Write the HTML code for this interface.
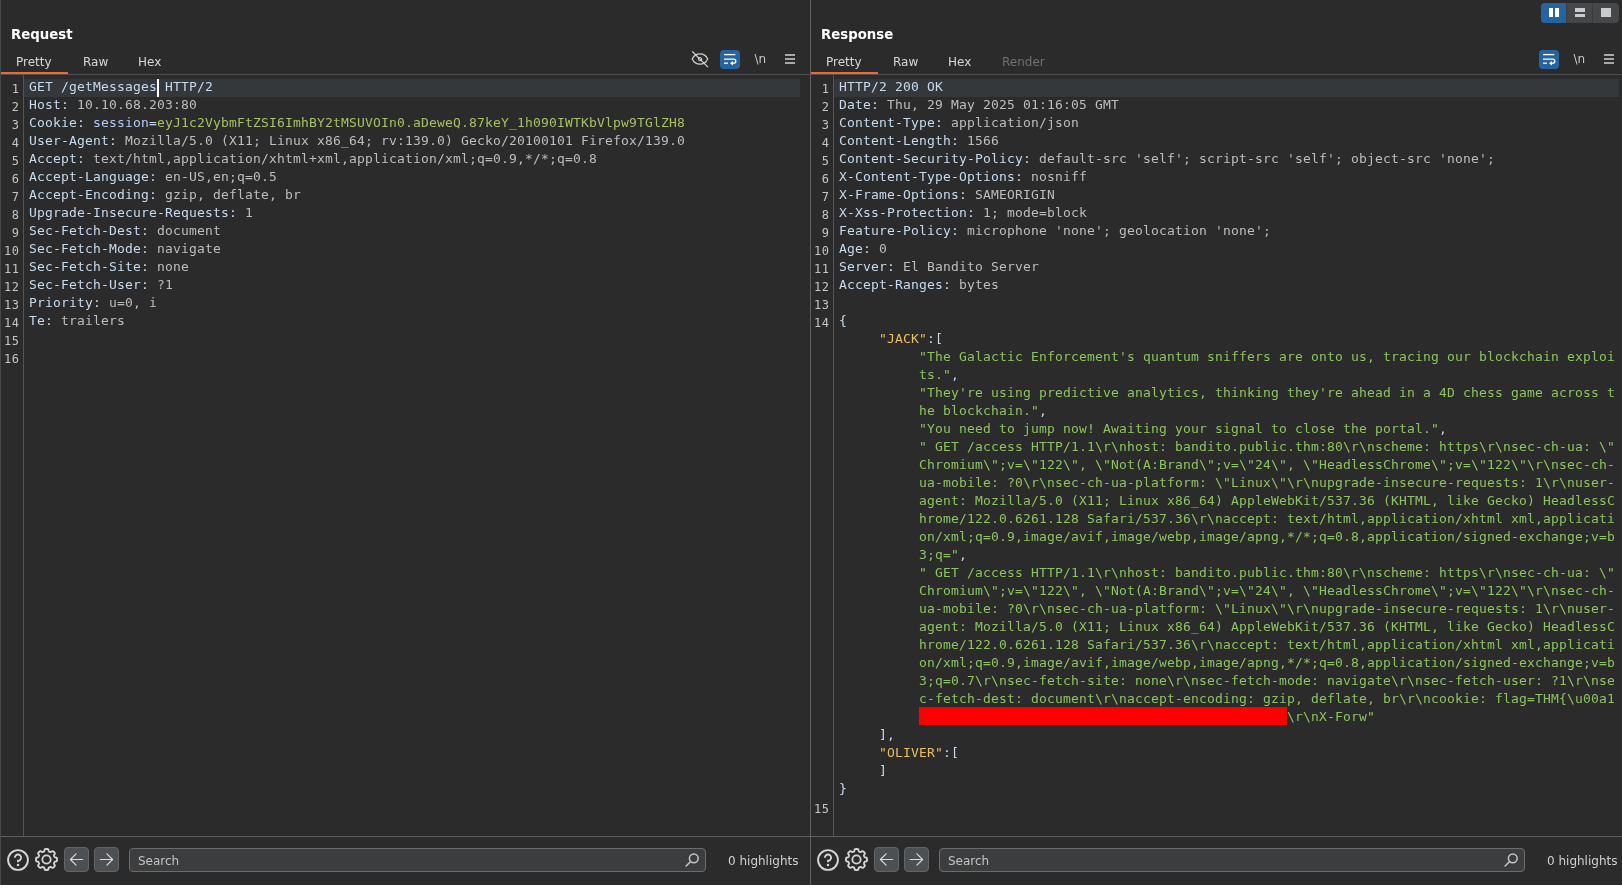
<!DOCTYPE html>
<html lang="en"><head><meta charset="utf-8"><title>Burp Repeater</title>
<style>
html,body{margin:0;padding:0;}
body{width:1622px;height:889px;overflow:hidden;background:#ffffff;position:relative;
 font-family:"DejaVu Sans","Liberation Sans",sans-serif;}
#app{will-change:transform;position:absolute;left:0;top:0;width:1622px;height:885px;background:#2b2b2b;overflow:hidden;}
.panel{position:absolute;top:0;height:885px;border-left:1px solid #5c5c5c;box-sizing:border-box;}
#req{left:0;width:810px;border-left-color:#47484a;}
#resp{left:810px;width:819px;border-left-color:#606060;}
.title{position:absolute;left:10px;top:25px;font-weight:bold;font-size:13.3px;line-height:20px;color:#ffffff;white-space:nowrap;}
.tab{position:absolute;top:53px;font-size:12px;line-height:18px;color:#d6d6d6;white-space:nowrap;}
.tab.dis{color:#6f6f6f;}
.sel{position:absolute;left:0;top:72px;width:67px;height:2px;background:#e96b33;}
.hr{position:absolute;left:0;right:0;height:1px;background:#5c5c5c;}
.gut{position:absolute;left:22px;top:75px;width:1px;height:761px;background:#555555;}
.ed{position:absolute;left:0;top:79px;font-family:"DejaVu Sans Mono","Liberation Mono",monospace;font-size:13px;letter-spacing:0.1738px;}
.ln{position:relative;height:18px;line-height:18px;white-space:pre;}
.ln.cur::before{content:"";position:absolute;left:23px;top:0;height:18px;background:#35383b;}
#req .ln.cur::before{width:776px;}
#resp .ln.cur::before{width:785px;}
.no{position:absolute;left:0;width:18.6px;text-align:right;color:#c4c4c4;top:1px;font-size:12px;letter-spacing:0.6px;}
.tx{position:absolute;left:28px;top:-1px;}
.h{color:#c6daee;}
.v{color:#bdbdbd;}
.p{color:#b8c8f8;}
.g{color:#8cc460;}
.c{color:#a5c261;}
.k{color:#e8bf62;}
.red{background:#ff0000;display:inline-block;height:18px;vertical-align:top;position:relative;top:-1px;}
.caret{display:inline-block;width:2px;height:18px;background:#ffffff;vertical-align:top;margin:0 -2px 0 0;position:relative;top:1px;}
.ib{position:absolute;}
.bluebtn{position:absolute;width:20px;height:19px;border-radius:4px;background:#26649f;top:50px;}
.nl{position:absolute;top:50px;font-size:12px;line-height:18px;color:#c8c8c8;letter-spacing:0px;}
.burger{position:absolute;top:54px;width:10px;height:10px;
 background:linear-gradient(#a8a8a8 0 2px,transparent 2px 4px,#a8a8a8 4px 6px,transparent 6px 8px,#a8a8a8 8px 10px);}
.sq{position:absolute;top:847px;width:25px;height:25px;border-radius:4px;background:#4c5052;border:1px solid #616568;box-sizing:border-box;}
.search{position:absolute;top:848px;height:24px;border-radius:4px;background:#3c3d3f;border:1px solid #6c6c6e;box-sizing:border-box;}
.search span{position:absolute;left:8px;top:3px;font-size:12px;line-height:18px;color:#c4c4c4;}
.hl{position:absolute;top:852px;font-size:12px;line-height:18px;color:#d0d0d0;white-space:nowrap;}
#toggle{position:absolute;left:1541px;top:3px;width:78px;height:20px;border-radius:4px;overflow:hidden;background:#464749;}
#toggle .a{position:absolute;left:0;top:0;width:25px;height:20px;background:#26649f;}
#toggle .s{position:absolute;top:0;width:1px;height:20px;background:#3a3b3d;}
#toggle i{position:absolute;background:#cbcbcd;}

</style></head>
<body>
<div id="app">
<div class="panel" id="req">
  <div class="title">Request</div>
  <div class="tab" style="left:15px">Pretty</div>
  <div class="tab" style="left:82px">Raw</div>
  <div class="tab" style="left:137px">Hex</div>
  <div class="sel"></div>
  <div class="hr" style="top:74px;background:#4f4f4f"></div>
  <div class="gut"></div>
  <svg class="ib" style="left:689px;top:50px" width="20" height="20" viewBox="0 0 20 20" fill="none" stroke="#cdcdcd" stroke-width="1.25" stroke-linecap="round" stroke-linejoin="round">
    <path d="M2.2 9 C5.5 2.3 14.5 2.3 17.7 9 C14.5 15.9 5.5 15.9 2.2 9 Z"/><circle cx="10" cy="9.1" r="1.7" stroke-width="1"/><path d="M2.6 1.8 L17.7 16.9"/>
  </svg>
  <div class="bluebtn" style="left:719px"></div>
  <svg class="ib" style="left:719px;top:50px" width="20" height="19" viewBox="0 0 20 19" fill="none" stroke="#ffffff" stroke-width="1.3" stroke-linecap="butt">
    <path d="M4 4.6 H15.3"/><path d="M4 9.1 H13.7 A2.05 2.05 0 0 1 13.7 13.2 H12.5"/><path d="M4 13.2 H8"/><path d="M13 10.9 L10 13.2 L13 15.5 Z" fill="#fff" stroke="none"/>
  </svg>
  <div class="nl" style="left:753.5px">\n</div>
  <div class="burger" style="left:784px"></div>
  <div class="ed">
<div class="ln cur"><span class="no">1</span><span class="tx"><span class="h">GET /getMessages</span><span class="caret"></span><span class="h"> HTTP/2</span></span></div>
<div class="ln"><span class="no">2</span><span class="tx"><span class="h">Host:</span><span class="v"> 10.10.68.203:80</span></span></div>
<div class="ln"><span class="no">3</span><span class="tx"><span class="h">Cookie: </span><span class="p">session</span><span class="h">=</span><span class="c">eyJ1c2VybmFtZSI6ImhBY2tMSUVOIn0.aDeweQ.87keY_1h090IWTKbVlpw9TGlZH8</span></span></div>
<div class="ln"><span class="no">4</span><span class="tx"><span class="h">User-Agent:</span><span class="v"> Mozilla/5.0 (X11; Linux x86_64; rv:139.0) Gecko/20100101 Firefox/139.0</span></span></div>
<div class="ln"><span class="no">5</span><span class="tx"><span class="h">Accept:</span><span class="v"> text/html,application/xhtml+xml,application/xml;q=0.9,*/*;q=0.8</span></span></div>
<div class="ln"><span class="no">6</span><span class="tx"><span class="h">Accept-Language:</span><span class="v"> en-US,en;q=0.5</span></span></div>
<div class="ln"><span class="no">7</span><span class="tx"><span class="h">Accept-Encoding:</span><span class="v"> gzip, deflate, br</span></span></div>
<div class="ln"><span class="no">8</span><span class="tx"><span class="h">Upgrade-Insecure-Requests:</span><span class="v"> 1</span></span></div>
<div class="ln"><span class="no">9</span><span class="tx"><span class="h">Sec-Fetch-Dest:</span><span class="v"> document</span></span></div>
<div class="ln"><span class="no">10</span><span class="tx"><span class="h">Sec-Fetch-Mode:</span><span class="v"> navigate</span></span></div>
<div class="ln"><span class="no">11</span><span class="tx"><span class="h">Sec-Fetch-Site:</span><span class="v"> none</span></span></div>
<div class="ln"><span class="no">12</span><span class="tx"><span class="h">Sec-Fetch-User:</span><span class="v"> ?1</span></span></div>
<div class="ln"><span class="no">13</span><span class="tx"><span class="h">Priority:</span><span class="v"> u=0, i</span></span></div>
<div class="ln"><span class="no">14</span><span class="tx"><span class="h">Te:</span><span class="v"> trailers</span></span></div>
<div class="ln"><span class="no">15</span><span class="tx"></span></div>
<div class="ln"><span class="no">16</span><span class="tx"></span></div>
  </div>
  <div class="hr" style="top:836px;background:#5e5e5e"></div>
  <svg class="ib" style="left:6px;top:849px" width="22" height="22" viewBox="0 0 22 22" fill="none" stroke="#d6d6d6" stroke-width="1.9" stroke-linecap="butt">
    <circle cx="11" cy="11" r="9.9"/><path d="M7.9 8.8 A3.1 3.1 0 1 1 11 11.7 V13.2" stroke-width="1.8"/><rect x="9.9" y="14.9" width="2.2" height="2.2" fill="#d6d6d6" stroke="none"/>
  </svg>
  <svg class="ib" style="left:34.4px;top:848.4px" width="23" height="23" viewBox="0 0 23 23" fill="none" stroke="#d6d6d6" stroke-width="1.85" stroke-linejoin="round">
    <path d="M22.05 11.50 L22.05 11.78 L22.03 12.05 L22.01 12.33 L21.96 12.60 L21.88 12.87 L21.72 13.12 L21.40 13.33 L20.86 13.49 L20.27 13.60 L19.86 13.74 L19.62 13.91 L19.49 14.10 L19.39 14.29 L19.30 14.49 L19.21 14.70 L19.13 14.90 L19.05 15.10 L18.98 15.31 L18.95 15.54 L18.99 15.82 L19.19 16.21 L19.52 16.71 L19.80 17.20 L19.88 17.58 L19.81 17.88 L19.68 18.12 L19.51 18.34 L19.34 18.56 L19.15 18.76 L18.96 18.96 L18.76 19.15 L18.56 19.34 L18.34 19.51 L18.12 19.68 L17.88 19.81 L17.58 19.88 L17.20 19.80 L16.71 19.52 L16.21 19.19 L15.82 18.99 L15.54 18.95 L15.31 18.98 L15.10 19.05 L14.90 19.13 L14.70 19.21 L14.49 19.30 L14.29 19.39 L14.10 19.49 L13.91 19.62 L13.74 19.86 L13.60 20.27 L13.49 20.86 L13.33 21.40 L13.12 21.72 L12.87 21.88 L12.60 21.96 L12.33 22.01 L12.05 22.03 L11.78 22.05 L11.50 22.05 L11.22 22.05 L10.95 22.03 L10.67 22.01 L10.40 21.96 L10.13 21.88 L9.88 21.72 L9.67 21.40 L9.51 20.86 L9.40 20.27 L9.26 19.86 L9.09 19.62 L8.90 19.49 L8.71 19.39 L8.51 19.30 L8.30 19.21 L8.10 19.13 L7.90 19.05 L7.69 18.98 L7.46 18.95 L7.18 18.99 L6.79 19.19 L6.29 19.52 L5.80 19.80 L5.42 19.88 L5.12 19.81 L4.88 19.68 L4.66 19.51 L4.44 19.34 L4.24 19.15 L4.04 18.96 L3.85 18.76 L3.66 18.56 L3.49 18.34 L3.32 18.12 L3.19 17.88 L3.12 17.58 L3.20 17.20 L3.48 16.71 L3.81 16.21 L4.01 15.82 L4.05 15.54 L4.02 15.31 L3.95 15.10 L3.87 14.90 L3.79 14.70 L3.70 14.49 L3.61 14.29 L3.51 14.10 L3.38 13.91 L3.14 13.74 L2.73 13.60 L2.14 13.49 L1.60 13.33 L1.28 13.12 L1.12 12.87 L1.04 12.60 L0.99 12.33 L0.97 12.05 L0.95 11.78 L0.95 11.50 L0.95 11.22 L0.97 10.95 L0.99 10.67 L1.04 10.40 L1.12 10.13 L1.28 9.88 L1.60 9.67 L2.14 9.51 L2.73 9.40 L3.14 9.26 L3.38 9.09 L3.51 8.90 L3.61 8.71 L3.70 8.51 L3.79 8.30 L3.87 8.10 L3.95 7.90 L4.02 7.69 L4.05 7.46 L4.01 7.18 L3.81 6.79 L3.48 6.29 L3.20 5.80 L3.12 5.42 L3.19 5.12 L3.32 4.88 L3.49 4.66 L3.66 4.44 L3.85 4.24 L4.04 4.04 L4.24 3.85 L4.44 3.66 L4.66 3.49 L4.88 3.32 L5.12 3.19 L5.42 3.12 L5.80 3.20 L6.29 3.48 L6.79 3.81 L7.18 4.01 L7.46 4.05 L7.69 4.02 L7.90 3.95 L8.10 3.87 L8.30 3.79 L8.51 3.70 L8.71 3.61 L8.90 3.51 L9.09 3.38 L9.26 3.14 L9.40 2.73 L9.51 2.14 L9.67 1.60 L9.88 1.28 L10.13 1.12 L10.40 1.04 L10.67 0.99 L10.95 0.97 L11.22 0.95 L11.50 0.95 L11.78 0.95 L12.05 0.97 L12.33 0.99 L12.60 1.04 L12.87 1.12 L13.12 1.28 L13.33 1.60 L13.49 2.14 L13.60 2.73 L13.74 3.14 L13.91 3.38 L14.10 3.51 L14.29 3.61 L14.49 3.70 L14.70 3.79 L14.90 3.87 L15.10 3.95 L15.31 4.02 L15.54 4.05 L15.82 4.01 L16.21 3.81 L16.71 3.48 L17.20 3.20 L17.58 3.12 L17.88 3.19 L18.12 3.32 L18.34 3.49 L18.56 3.66 L18.76 3.85 L18.96 4.04 L19.15 4.24 L19.34 4.44 L19.51 4.66 L19.68 4.88 L19.81 5.12 L19.88 5.42 L19.80 5.80 L19.52 6.29 L19.19 6.79 L18.99 7.18 L18.95 7.46 L18.98 7.69 L19.05 7.90 L19.13 8.10 L19.21 8.30 L19.30 8.51 L19.39 8.71 L19.49 8.90 L19.62 9.09 L19.86 9.26 L20.27 9.40 L20.86 9.51 L21.40 9.67 L21.72 9.88 L21.88 10.13 L21.96 10.40 L22.01 10.67 L22.03 10.95 L22.05 11.22 Z"/><circle cx="11.5" cy="11.5" r="4.15"/>
  </svg>
  <div class="sq" style="left:63px"></div>
  <div class="sq" style="left:93px"></div>
  <svg class="ib" style="left:63px;top:847px" width="25" height="25" viewBox="0 0 25 25" fill="none" stroke="#dadada" stroke-width="1.15" stroke-linecap="round" stroke-linejoin="round"><path d="M18.7 12.5 H6.4 M12.1 6.8 L6.4 12.5 L12.1 18.2"/></svg>
  <svg class="ib" style="left:93px;top:847px" width="25" height="25" viewBox="0 0 25 25" fill="none" stroke="#dadada" stroke-width="1.15" stroke-linecap="round" stroke-linejoin="round"><path d="M6.3 12.5 H18.6 M12.9 6.8 L18.6 12.5 L12.9 18.2"/></svg>
  <div class="search" style="left:128px;width:577px"><span>Search</span></div>
  <svg class="ib" style="left:683px;top:852px" width="16" height="16" viewBox="0 0 16 16" fill="none" stroke="#c6c6c6" stroke-width="1.5" stroke-linecap="round"><circle cx="9.8" cy="6.3" r="4.4"/><path d="M6.6 9.5 L2.1 14"/></svg>
  <div class="hl" style="left:727px">0 highlights</div>
</div>
<div class="panel" id="resp">
  <div class="title">Response</div>
  <div class="tab" style="left:15px">Pretty</div>
  <div class="tab" style="left:82px">Raw</div>
  <div class="tab" style="left:137px">Hex</div>
  <div class="tab dis" style="left:191px">Render</div>
  <div class="sel"></div>
  <div class="hr" style="top:74px;background:#4f4f4f"></div>
  <div class="gut"></div>
  <div class="bluebtn" style="left:728px"></div>
  <svg class="ib" style="left:728px;top:50px" width="20" height="19" viewBox="0 0 20 19" fill="none" stroke="#ffffff" stroke-width="1.3" stroke-linecap="butt">
    <path d="M4 4.6 H15.3"/><path d="M4 9.1 H13.7 A2.05 2.05 0 0 1 13.7 13.2 H12.5"/><path d="M4 13.2 H8"/><path d="M13 10.9 L10 13.2 L13 15.5 Z" fill="#fff" stroke="none"/>
  </svg>
  <div class="nl" style="left:762.5px">\n</div>
  <div class="burger" style="left:793px"></div>
  <div class="ed">
<div class="ln cur"><span class="no">1</span><span class="tx"><span class="h">HTTP/2 200 OK</span></span></div>
<div class="ln"><span class="no">2</span><span class="tx"><span class="h">Date:</span><span class="v"> Thu, 29 May 2025 01:16:05 GMT</span></span></div>
<div class="ln"><span class="no">3</span><span class="tx"><span class="h">Content-Type:</span><span class="v"> application/json</span></span></div>
<div class="ln"><span class="no">4</span><span class="tx"><span class="h">Content-Length:</span><span class="v"> 1566</span></span></div>
<div class="ln"><span class="no">5</span><span class="tx"><span class="h">Content-Security-Policy:</span><span class="v"> default-src 'self'; script-src 'self'; object-src 'none';</span></span></div>
<div class="ln"><span class="no">6</span><span class="tx"><span class="h">X-Content-Type-Options:</span><span class="v"> nosniff</span></span></div>
<div class="ln"><span class="no">7</span><span class="tx"><span class="h">X-Frame-Options:</span><span class="v"> SAMEORIGIN</span></span></div>
<div class="ln"><span class="no">8</span><span class="tx"><span class="h">X-Xss-Protection:</span><span class="v"> 1; mode=block</span></span></div>
<div class="ln"><span class="no">9</span><span class="tx"><span class="h">Feature-Policy:</span><span class="v"> microphone 'none'; geolocation 'none';</span></span></div>
<div class="ln"><span class="no">10</span><span class="tx"><span class="h">Age:</span><span class="v"> 0</span></span></div>
<div class="ln"><span class="no">11</span><span class="tx"><span class="h">Server:</span><span class="v"> El Bandito Server</span></span></div>
<div class="ln"><span class="no">12</span><span class="tx"><span class="h">Accept-Ranges:</span><span class="v"> bytes</span></span></div>
<div class="ln"><span class="no">13</span><span class="tx"></span></div>
<div class="ln"><span class="no">14</span><span class="tx"><span class="h">{</span></span></div>
<div class="ln"><span class="no"></span><span class="tx">     <span class="k">"JACK"</span><span class="h">:[</span></span></div>
<div class="ln"><span class="no"></span><span class="tx">          <span class="g">"The Galactic Enforcement's quantum sniffers are onto us, tracing our blockchain exploi</span></span></div>
<div class="ln"><span class="no"></span><span class="tx">          <span class="g">ts."</span><span class="h">,</span></span></div>
<div class="ln"><span class="no"></span><span class="tx">          <span class="g">"They're using predictive analytics, thinking they're ahead in a 4D chess game across t</span></span></div>
<div class="ln"><span class="no"></span><span class="tx">          <span class="g">he blockchain."</span><span class="h">,</span></span></div>
<div class="ln"><span class="no"></span><span class="tx">          <span class="g">"You need to jump now! Awaiting your signal to close the portal."</span><span class="h">,</span></span></div>
<div class="ln"><span class="no"></span><span class="tx">          <span class="g">" GET /access HTTP/1.1\r\nhost: bandito.public.thm:80\r\nscheme: https\r\nsec-ch-ua: \"</span></span></div>
<div class="ln"><span class="no"></span><span class="tx">          <span class="g">Chromium\";v=\"122\", \"Not(A:Brand\";v=\"24\", \"HeadlessChrome\";v=\"122\"\r\nsec-ch-</span></span></div>
<div class="ln"><span class="no"></span><span class="tx">          <span class="g">ua-mobile: ?0\r\nsec-ch-ua-platform: \"Linux\"\r\nupgrade-insecure-requests: 1\r\nuser-</span></span></div>
<div class="ln"><span class="no"></span><span class="tx">          <span class="g">agent: Mozilla/5.0 (X11; Linux x86_64) AppleWebKit/537.36 (KHTML, like Gecko) HeadlessC</span></span></div>
<div class="ln"><span class="no"></span><span class="tx">          <span class="g">hrome/122.0.6261.128 Safari/537.36\r\naccept: text/html,application/xhtml xml,applicati</span></span></div>
<div class="ln"><span class="no"></span><span class="tx">          <span class="g">on/xml;q=0.9,image/avif,image/webp,image/apng,*/*;q=0.8,application/signed-exchange;v=b</span></span></div>
<div class="ln"><span class="no"></span><span class="tx">          <span class="g">3;q="</span><span class="h">,</span></span></div>
<div class="ln"><span class="no"></span><span class="tx">          <span class="g">" GET /access HTTP/1.1\r\nhost: bandito.public.thm:80\r\nscheme: https\r\nsec-ch-ua: \"</span></span></div>
<div class="ln"><span class="no"></span><span class="tx">          <span class="g">Chromium\";v=\"122\", \"Not(A:Brand\";v=\"24\", \"HeadlessChrome\";v=\"122\"\r\nsec-ch-</span></span></div>
<div class="ln"><span class="no"></span><span class="tx">          <span class="g">ua-mobile: ?0\r\nsec-ch-ua-platform: \"Linux\"\r\nupgrade-insecure-requests: 1\r\nuser-</span></span></div>
<div class="ln"><span class="no"></span><span class="tx">          <span class="g">agent: Mozilla/5.0 (X11; Linux x86_64) AppleWebKit/537.36 (KHTML, like Gecko) HeadlessC</span></span></div>
<div class="ln"><span class="no"></span><span class="tx">          <span class="g">hrome/122.0.6261.128 Safari/537.36\r\naccept: text/html,application/xhtml xml,applicati</span></span></div>
<div class="ln"><span class="no"></span><span class="tx">          <span class="g">on/xml;q=0.9,image/avif,image/webp,image/apng,*/*;q=0.8,application/signed-exchange;v=b</span></span></div>
<div class="ln"><span class="no"></span><span class="tx">          <span class="g">3;q=0.7\r\nsec-fetch-site: none\r\nsec-fetch-mode: navigate\r\nsec-fetch-user: ?1\r\nse</span></span></div>
<div class="ln"><span class="no"></span><span class="tx">          <span class="g">c-fetch-dest: document\r\naccept-encoding: gzip, deflate, br\r\ncookie: flag=THM{\u00a1</span></span></div>
<div class="ln"><span class="no"></span><span class="tx">          <span class="red">                                              </span><span class="g">\r\nX-Forw"</span></span></div>
<div class="ln"><span class="no"></span><span class="tx">     <span class="h">],</span></span></div>
<div class="ln"><span class="no"></span><span class="tx">     <span class="k">"OLIVER"</span><span class="h">:[</span></span></div>
<div class="ln"><span class="no"></span><span class="tx">     <span class="h">]</span></span></div>
<div class="ln"><span class="no"></span><span class="tx"><span class="h">}</span></span></div>
<div class="ln"><span class="no">15</span><span class="tx"></span></div>
  </div>
  <div class="hr" style="top:836px;background:#5e5e5e"></div>
  <svg class="ib" style="left:6px;top:849px" width="22" height="22" viewBox="0 0 22 22" fill="none" stroke="#d6d6d6" stroke-width="1.9" stroke-linecap="butt">
    <circle cx="11" cy="11" r="9.9"/><path d="M7.9 8.8 A3.1 3.1 0 1 1 11 11.7 V13.2" stroke-width="1.8"/><rect x="9.9" y="14.9" width="2.2" height="2.2" fill="#d6d6d6" stroke="none"/>
  </svg>
  <svg class="ib" style="left:34.4px;top:848.4px" width="23" height="23" viewBox="0 0 23 23" fill="none" stroke="#d6d6d6" stroke-width="1.85" stroke-linejoin="round">
    <path d="M22.05 11.50 L22.05 11.78 L22.03 12.05 L22.01 12.33 L21.96 12.60 L21.88 12.87 L21.72 13.12 L21.40 13.33 L20.86 13.49 L20.27 13.60 L19.86 13.74 L19.62 13.91 L19.49 14.10 L19.39 14.29 L19.30 14.49 L19.21 14.70 L19.13 14.90 L19.05 15.10 L18.98 15.31 L18.95 15.54 L18.99 15.82 L19.19 16.21 L19.52 16.71 L19.80 17.20 L19.88 17.58 L19.81 17.88 L19.68 18.12 L19.51 18.34 L19.34 18.56 L19.15 18.76 L18.96 18.96 L18.76 19.15 L18.56 19.34 L18.34 19.51 L18.12 19.68 L17.88 19.81 L17.58 19.88 L17.20 19.80 L16.71 19.52 L16.21 19.19 L15.82 18.99 L15.54 18.95 L15.31 18.98 L15.10 19.05 L14.90 19.13 L14.70 19.21 L14.49 19.30 L14.29 19.39 L14.10 19.49 L13.91 19.62 L13.74 19.86 L13.60 20.27 L13.49 20.86 L13.33 21.40 L13.12 21.72 L12.87 21.88 L12.60 21.96 L12.33 22.01 L12.05 22.03 L11.78 22.05 L11.50 22.05 L11.22 22.05 L10.95 22.03 L10.67 22.01 L10.40 21.96 L10.13 21.88 L9.88 21.72 L9.67 21.40 L9.51 20.86 L9.40 20.27 L9.26 19.86 L9.09 19.62 L8.90 19.49 L8.71 19.39 L8.51 19.30 L8.30 19.21 L8.10 19.13 L7.90 19.05 L7.69 18.98 L7.46 18.95 L7.18 18.99 L6.79 19.19 L6.29 19.52 L5.80 19.80 L5.42 19.88 L5.12 19.81 L4.88 19.68 L4.66 19.51 L4.44 19.34 L4.24 19.15 L4.04 18.96 L3.85 18.76 L3.66 18.56 L3.49 18.34 L3.32 18.12 L3.19 17.88 L3.12 17.58 L3.20 17.20 L3.48 16.71 L3.81 16.21 L4.01 15.82 L4.05 15.54 L4.02 15.31 L3.95 15.10 L3.87 14.90 L3.79 14.70 L3.70 14.49 L3.61 14.29 L3.51 14.10 L3.38 13.91 L3.14 13.74 L2.73 13.60 L2.14 13.49 L1.60 13.33 L1.28 13.12 L1.12 12.87 L1.04 12.60 L0.99 12.33 L0.97 12.05 L0.95 11.78 L0.95 11.50 L0.95 11.22 L0.97 10.95 L0.99 10.67 L1.04 10.40 L1.12 10.13 L1.28 9.88 L1.60 9.67 L2.14 9.51 L2.73 9.40 L3.14 9.26 L3.38 9.09 L3.51 8.90 L3.61 8.71 L3.70 8.51 L3.79 8.30 L3.87 8.10 L3.95 7.90 L4.02 7.69 L4.05 7.46 L4.01 7.18 L3.81 6.79 L3.48 6.29 L3.20 5.80 L3.12 5.42 L3.19 5.12 L3.32 4.88 L3.49 4.66 L3.66 4.44 L3.85 4.24 L4.04 4.04 L4.24 3.85 L4.44 3.66 L4.66 3.49 L4.88 3.32 L5.12 3.19 L5.42 3.12 L5.80 3.20 L6.29 3.48 L6.79 3.81 L7.18 4.01 L7.46 4.05 L7.69 4.02 L7.90 3.95 L8.10 3.87 L8.30 3.79 L8.51 3.70 L8.71 3.61 L8.90 3.51 L9.09 3.38 L9.26 3.14 L9.40 2.73 L9.51 2.14 L9.67 1.60 L9.88 1.28 L10.13 1.12 L10.40 1.04 L10.67 0.99 L10.95 0.97 L11.22 0.95 L11.50 0.95 L11.78 0.95 L12.05 0.97 L12.33 0.99 L12.60 1.04 L12.87 1.12 L13.12 1.28 L13.33 1.60 L13.49 2.14 L13.60 2.73 L13.74 3.14 L13.91 3.38 L14.10 3.51 L14.29 3.61 L14.49 3.70 L14.70 3.79 L14.90 3.87 L15.10 3.95 L15.31 4.02 L15.54 4.05 L15.82 4.01 L16.21 3.81 L16.71 3.48 L17.20 3.20 L17.58 3.12 L17.88 3.19 L18.12 3.32 L18.34 3.49 L18.56 3.66 L18.76 3.85 L18.96 4.04 L19.15 4.24 L19.34 4.44 L19.51 4.66 L19.68 4.88 L19.81 5.12 L19.88 5.42 L19.80 5.80 L19.52 6.29 L19.19 6.79 L18.99 7.18 L18.95 7.46 L18.98 7.69 L19.05 7.90 L19.13 8.10 L19.21 8.30 L19.30 8.51 L19.39 8.71 L19.49 8.90 L19.62 9.09 L19.86 9.26 L20.27 9.40 L20.86 9.51 L21.40 9.67 L21.72 9.88 L21.88 10.13 L21.96 10.40 L22.01 10.67 L22.03 10.95 L22.05 11.22 Z"/><circle cx="11.5" cy="11.5" r="4.15"/>
  </svg>
  <div class="sq" style="left:63px"></div>
  <div class="sq" style="left:93px"></div>
  <svg class="ib" style="left:63px;top:847px" width="25" height="25" viewBox="0 0 25 25" fill="none" stroke="#dadada" stroke-width="1.15" stroke-linecap="round" stroke-linejoin="round"><path d="M18.7 12.5 H6.4 M12.1 6.8 L6.4 12.5 L12.1 18.2"/></svg>
  <svg class="ib" style="left:93px;top:847px" width="25" height="25" viewBox="0 0 25 25" fill="none" stroke="#dadada" stroke-width="1.15" stroke-linecap="round" stroke-linejoin="round"><path d="M6.3 12.5 H18.6 M12.9 6.8 L18.6 12.5 L12.9 18.2"/></svg>
  <div class="search" style="left:128px;width:586px"><span>Search</span></div>
  <svg class="ib" style="left:692px;top:852px" width="16" height="16" viewBox="0 0 16 16" fill="none" stroke="#c6c6c6" stroke-width="1.5" stroke-linecap="round"><circle cx="9.8" cy="6.3" r="4.4"/><path d="M6.6 9.5 L2.1 14"/></svg>
  <div class="hl" style="left:736px">0 highlights</div>
</div>
<div id="toggle"><div class="a"></div><div class="s" style="left:25px"></div><div class="s" style="left:51px"></div>
  <i style="left:7.8px;top:5px;width:4.4px;height:9px;background:#fff"></i><i style="left:13.9px;top:5px;width:4.4px;height:9px;background:#fff"></i>
  <i style="left:33.8px;top:5.3px;width:10.4px;height:3.4px"></i><i style="left:33.8px;top:10.8px;width:10.4px;height:3.3px"></i>
  <i style="left:59.7px;top:5.3px;width:10.5px;height:8.8px"></i>
</div>
</div>

</body></html>
